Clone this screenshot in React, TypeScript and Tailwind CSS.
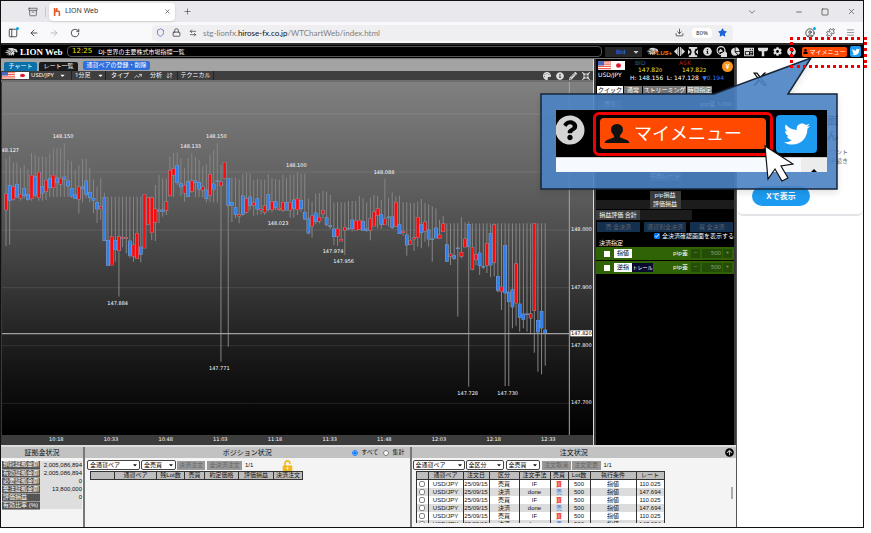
import React from "react";
import {
  FaInfoCircle, FaChartPie, FaCog, FaQuestionCircle, FaTwitter, FaPalette, FaStar, FaUser,
  FaCompressArrowsAlt, FaPencilAlt, FaCaretDown, FaArrowCircleUp, FaUnlockAlt, FaNewspaper,
} from "react-icons/fa";
import {
  ArrowLeft, ArrowRight, RotateCw, Shield, Lock, ArrowLeftRight, Download, CircleUser, Puzzle, Menu, X, Plus,
  ChevronDown, Minus, Square, Archive, PanelLeft, TrendingUp, ArrowDownUp,
} from "lucide-react";

const sans = "font-['Noto_Sans','Noto_Sans_CJK_JP',sans-serif]";
const arial = "font-['Liberation_Sans','Noto_Sans_CJK_JP',sans-serif]";
const verdana = "font-['DejaVu_Sans','Noto_Sans_CJK_JP',sans-serif]";

type Candle = [high: number, top: number, bottom: number, low: number, side: "r" | "b"];

const candles: Candle[] = [
  [222, 327, 375, 483, "r"], [212, 301, 347, 479, "b"], [233, 305, 343, 347, "r"], [233, 298, 336, 338, "b"],
  [248, 328, 340, 347, "r"], [240, 310, 332, 340, "b"], [252, 328, 343, 347, "b"], [204, 271, 341, 347, "r"],
  [210, 275, 330, 336, "b"], [214, 262, 338, 347, "r"], [214, 304, 324, 347, "b"], [216, 286, 319, 345, "r"],
  [206, 280, 308, 336, "b"], [192, 271, 308, 336, "r"], [190, 279, 293, 336, "b"], [188, 280, 298, 336, "r"],
  [175, 276, 283, 336, "b"], [225, 288, 303, 336, "b"], [228, 310, 333, 338, "b"], [254, 330, 341, 341, "b"],
  [240, 306, 342, 385, "r"], [222, 306, 311, 352, "b"], [222, 288, 328, 338, "b"], [248, 322, 338, 352, "b"],
  [283, 340, 346, 384, "b"], [304, 352, 372, 414, "b"], [280, 365, 371, 405, "r"], [323, 337, 467, 467, "b"],
  [335, 466, 541, 541, "b"], [335, 455, 540, 540, "r"], [335, 466, 494, 530, "b"], [335, 455, 497, 635, "r"],
  [335, 457, 460, 487, "r"], [335, 457, 460, 505, "r"], [335, 468, 511, 518, "b"], [335, 480, 514, 530, "r"],
  [335, 445, 521, 521, "r"], [335, 486, 508, 532, "b"], [328, 328, 489, 489, "r"], [335, 338, 418, 418, "r"],
  [335, 338, 443, 466, "r"], [300, 372, 412, 468, "r"], [270, 375, 378, 415, "b"], [280, 375, 380, 395, "b"],
  [280, 350, 376, 390, "r"], [214, 256, 332, 336, "r"], [204, 251, 270, 336, "r"], [202, 241, 293, 300, "b"],
  [220, 296, 305, 334, "b"], [248, 301, 324, 350, "r"], [218, 290, 335, 335, "b"], [204, 288, 319, 323, "r"],
  [216, 288, 293, 336, "b"], [224, 292, 312, 336, "b"], [244, 306, 315, 336, "r"], [238, 315, 341, 352, "b"],
  [210, 268, 331, 352, "r"], [195, 297, 312, 352, "b"], [175, 288, 290, 353, "b"], [240, 291, 302, 830, "r"],
  [232, 232, 279, 279, "r"], [281, 281, 361, 785, "b"], [278, 352, 361, 411, "b"], [278, 367, 388, 400, "b"],
  [284, 390, 393, 415, "r"], [268, 333, 388, 392, "b"], [263, 341, 382, 385, "r"], [266, 336, 361, 376, "b"],
  [284, 353, 360, 392, "r"], [282, 341, 372, 390, "b"], [284, 372, 375, 388, "r"], [284, 362, 382, 390, "r"],
  [268, 328, 373, 380, "b"], [280, 350, 374, 382, "r"], [282, 350, 367, 376, "b"], [284, 370, 373, 378, "r"],
  [270, 352, 376, 380, "r"], [278, 352, 375, 376, "b"], [268, 352, 375, 398, "r"], [270, 345, 370, 398, "b"],
  [262, 342, 374, 390, "r"], [266, 346, 371, 380, "b"], [266, 382, 402, 405, "b"], [340, 401, 444, 448, "b"],
  [350, 393, 423, 458, "r"], [326, 384, 409, 418, "b"], [324, 397, 408, 415, "r"], [318, 376, 386, 400, "r"],
  [320, 398, 418, 424, "b"], [330, 422, 425, 432, "b"], [352, 432, 455, 480, "b"], [352, 432, 454, 482, "r"],
  [352, 463, 468, 468, "r"], [352, 427, 436, 510, "r"], [348, 430, 432, 436, "b"], [348, 405, 431, 440, "b"],
  [348, 408, 435, 435, "r"], [332, 406, 433, 435, "r"], [340, 409, 436, 436, "b"], [352, 432, 436, 440, "b"],
  [338, 401, 436, 466, "r"], [330, 381, 423, 423, "r"], [333, 371, 391, 430, "r"], [344, 389, 418, 432, "b"],
  [281, 402, 419, 419, "r"], [338, 396, 398, 425, "b"], [322, 396, 427, 432, "b"], [335, 352, 424, 424, "r"],
  [332, 419, 446, 446, "b"], [352, 439, 443, 452, "r"], [352, 450, 480, 512, "b"], [354, 466, 478, 478, "r"],
  [354, 458, 462, 498, "r"], [350, 397, 458, 485, "r"], [342, 419, 443, 490, "b"], [354, 411, 438, 470, "r"],
  [358, 435, 462, 485, "b"], [364, 462, 464, 530, "b"], [370, 429, 459, 459, "b"], [404, 450, 460, 460, "r"],
  [392, 416, 440, 440, "r"], [415, 479, 529, 529, "b"], [415, 507, 514, 540, "r"], [415, 512, 520, 525, "b"],
  [415, 489, 491, 695, "b"], [397, 502, 514, 520, "r"], [412, 462, 486, 486, "r"], [410, 418, 484, 905, "b"],
  [415, 487, 553, 556, "r"], [415, 508, 524, 540, "r"], [415, 504, 542, 570, "b"], [415, 544, 546, 552, "b"],
  [415, 475, 541, 564, "r"], [415, 445, 540, 576, "b"], [415, 419, 532, 574, "r"], [415, 574, 616, 622, "b"],
  [415, 606, 619, 675, "r"], [415, 481, 624, 903, "b"], [415, 621, 650, 903, "b"], [415, 614, 666, 730, "b"],
  [415, 536, 654, 722, "r"], [415, 657, 697, 740, "b"], [415, 687, 703, 730, "b"], [415, 687, 689, 740, "b"],
  [415, 686, 699, 748, "r"], [415, 415, 677, 803, "r"], [415, 706, 741, 860, "b"], [415, 679, 729, 868, "b"],
  [415, 735, 745, 842, "b"],
];

const priceTags: [number, number, string][] = [
  [26, 200, "148.127"], [189, 160, "148.150"], [649, 160, "148.150"], [572, 189, "148.133"], [889, 247, "148.100"],
  [834, 419, "148.023"], [1152, 267, "148.088"], [999, 504, "147.974"], [1031, 535, "147.956"],
  [353, 660, "147.884"], [658, 855, "147.771"], [1403, 930, "147.728"], [1523, 930, "147.730"],
];
const levels: [number, string][] = [[435, "148.000"], [608, "147.900"], [782, "147.800"], [955, "147.700"]];
const times = ["10:18", "10:33", "10:48", "11:03", "11:18", "11:33", "11:48", "12:03", "12:18", "12:33"];

function Chart() {
  return (
    <div className="flex h-[363px] justify-end overflow-hidden bg-[#3a3a3a]">
      <svg viewBox="6 -9 1773 1089" className={`h-full w-auto shrink-0 ${verdana}`} fontSize="15" fill="#fff">
        <defs>
          <linearGradient id="sky" x1="0" y1="0" x2="0" y2="1">
            <stop offset="0" stopColor="#808080" />
            <stop offset="0.3" stopColor="#5f5f5f" />
            <stop offset="0.6" stopColor="#343434" />
            <stop offset="0.8" stopColor="#161616" />
            <stop offset="1" stopColor="#000" />
          </linearGradient>
        </defs>
        <rect x="0" y="-9" width="1780" height="1059" fill="url(#sky)" />
        {[87, 261, 435, 608, 782, 955].map((y) => (
          <path key={y} d={`M0 ${y}H1708`} stroke="#fff" strokeOpacity="0.1" strokeWidth="3" />
        ))}
        {candles.map(([high, top, bottom, low, side], i) => {
          const x = 18 + i * 10.93;
          return (
            <g key={i}>
              <path d={`M${x} ${high}V${low}`} stroke="#868686" strokeWidth="3" />
              <rect x={x - 5.5} y={top - 1} width="11" height={bottom - top + 2} fill="#93a4bb" />
              <rect x={x - 4} y={top} width="8" height={bottom - top} fill={side === "r" ? "#ff0808" : "#2f7fee"} />
            </g>
          );
        })}
        <path d="M0 746H1708" stroke="#a0a0a0" strokeWidth="4" />
        <path d="M1708 -9V1050" stroke="#a8a8a8" strokeWidth="3" />
        {priceTags.map(([x, y, t]) => (
          <text key={`${x}`} x={x} y={y} textAnchor="middle">{t}</text>
        ))}
        {levels.map(([y, t]) => (
          <text key={t} x="1713" y={y + 3}>{t}</text>
        ))}
        <rect x="1711" y="736" width="65" height="18" fill="#fff" />
        <text x="1713" y="751" fill="#000">147.820</text>
        <rect x="0" y="1050" width="1780" height="30" fill="#3c3c3c" />
        {times.map((t, i) => (
          <text key={t} x={169 + i * 164} y="1069" textAnchor="middle">{t}</text>
        ))}
      </svg>
    </div>
  );
}

function Lion({ className }: { className: string }) {
  return (
    <svg viewBox="0 0 30 22" className={className} fill="#d8d8d8">
      <path d="M1 12 9 9 3 8 12 5 7 3 17 2 27 5 30 11 26 12 24 10 21 11 23 14 20 19 18 16 15 20 14 16 10 20 10 15 4 18 9 13Z" />
      <path d="M5 10 15 7M8 14 16 9M13 15 19 9M20 7l5 2" stroke="#000" strokeWidth="1.2" fill="none" />
    </svg>
  );
}

function Flags({ className }: { className: string }) {
  return (
    <svg viewBox="0 0 27 10" preserveAspectRatio="none" className={className}>
      <rect width="27" height="10" fill="#fff" />
      <path d="M0 1H13M0 3.5H13M0 6H13M0 8.5H13" stroke="#f0604e" strokeWidth="1.3" />
      <rect width="6" height="5" fill="#4a67c0" />
      <circle cx="20.500" cy="5" r="2.500" fill="#e2182d" />
    </svg>
  );
}

function Browser() {
  return (
    <header className={`text-[#333] ${sans}`}>
      <div className="flex h-[21px] items-center bg-[#e9e9ed] pr-[7px]">
        <div className="flex w-[45px] items-center justify-end border-r border-[#c8c8cc] pr-[7px]">
          <Archive className="size-[10px]" strokeWidth={1.5} />
        </div>
        <div className="ml-[3px] flex h-[18px] w-[126px] items-center rounded-sm bg-white px-1 shadow-sm">
          <svg viewBox="0 0 10 10" className="size-[8px]" fill="none" stroke="#e8592a" strokeWidth="2">
            <path d="M2 0V10M2 5Q8 2 8 6V10M5 0 4 4" />
          </svg>
          <span className="ml-1 flex-1 text-[7px]">LION Web</span>
          <button aria-label="タブを閉じる"><X className="size-[7px]" /></button>
        </div>
        <button aria-label="新しいタブ" className="ml-[8px]"><Plus className="size-[9px]" strokeWidth={1.5} /></button>
        <div className="flex-1" />
        <ChevronDown className="mr-[38px] size-[10px]" strokeWidth={1.5} />
        <button aria-label="最小化" className="mr-[18px]"><Minus className="size-[8px]" /></button>
        <button aria-label="最大化" className="mr-[18px]"><Square className="size-[8px]" /></button>
        <button aria-label="閉じる"><X className="size-[9px]" strokeWidth={1.5} /></button>
      </div>
      <div className="flex h-[21px] items-center bg-[#f9f9fb] pl-[7px] pr-[8px]">
        <span className="relative">
          <PanelLeft className="size-[10px]" />
          <span className="absolute -right-px -top-px size-[3px] rounded-full bg-[#00a8f0]" />
        </span>
        <button aria-label="戻る" className="ml-[11px]"><ArrowLeft className="size-[10px]" /></button>
        <button aria-label="進む" className="ml-[10px] text-[#b0b0b0]"><ArrowRight className="size-[10px]" /></button>
        <button aria-label="再読み込み" className="ml-[11px]"><RotateCw className="size-[10px]" /></button>
        <div className="ml-[72px] flex h-[16px] flex-1 items-center rounded-sm bg-[#efeff1] pl-1 pr-[6px]">
          <Shield className="size-[9px] text-[#4a64b8]" />
          <Lock className="ml-[7px] size-[9px]" />
          <ArrowLeftRight className="ml-[8px] size-[8px]" />
          <span className="ml-[6px] flex-1 font-['Lato',sans-serif] text-[8px] text-[#808080]">
            stg-lionfx.<span className="text-[#111]">hirose-fx.co.jp</span>/WTChartWeb/index.html
          </span>
          <Download className="size-[9px]" />
          <span className="ml-[8px] w-[20px] rounded-sm bg-white text-center text-[6px] leading-[10px] text-[#222]">80%</span>
          <FaStar className="ml-[6px] size-[9px] text-[#1a66d8]" />
        </div>
        <span className="relative ml-[72px]">
          <CircleUser className="size-[10px]" />
          <span className="absolute -right-px -top-px size-[3px] rounded-full bg-[#00a8f0]" />
        </span>
        <Puzzle className="ml-[11px] size-[9px]" />
        <Menu className="ml-[11px] size-[9px] text-[#777]" />
      </div>
    </header>
  );
}

const toolIcons = [
  <svg key="a" viewBox="0 0 12 12" className="size-[11px]" fill="currentColor"><path d="M0 6 4 2V10ZM12 6 8 2V10ZM4.500 1H5.500V11H4.500ZM6.500 1H7.500V11H6.500Z" /></svg>,
  <svg key="b" viewBox="0 0 12 12" className="size-[10px]" fill="currentColor"><path d="M1 0H11V2H9L7.500 6 9 10H11V12H1V10H3L4.500 6 3 2H1ZM0 3 3 6 0 9ZM12 3 9 6 12 9Z" /></svg>,
  <FaInfoCircle key="c" className="size-[9px]" />,
  <svg key="d" viewBox="0 0 12 12" className="size-[11px]" fill="none" stroke="currentColor" strokeWidth="1.3"><circle cx="5.500" cy="5" r="4.300" /><path d="M3 7 5 4 7 6M6 11.300H12V8.500L10 6.500 6 8.500Z" fill="currentColor" /></svg>,
  <FaChartPie key="e" className="size-[9px]" />,
  <svg key="f" viewBox="0 0 12 12" className="size-[10px]" fill="currentColor"><path fillRule="evenodd" d="M0 1H12V11H0ZM1 5V10H11V5ZM7 2V4H8V2ZM9.500 2V4H10.500V2Z" /><path d="M2 6H6V9H2ZM7 6H10V7H7ZM7 8H10V9H7Z" /></svg>,
  <svg key="g" viewBox="0 0 12 12" className="size-[10px]" fill="currentColor"><path d="M0 1H12V4H11V5H7.500V11H4.500V5H1V4H0Z" /></svg>,
  <FaCog key="h" className="size-[9px]" />,
  <FaQuestionCircle key="i" className="size-[9px]" />,
];

function AppBar() {
  return (
    <div className="flex h-[15px] items-center border-t-2 border-[#2c2c2c] bg-black pl-[3px] pr-[2px] text-white">
      <Lion className="h-[10px] w-[14px]" />
      <span className="ml-[2px] w-[47px] whitespace-nowrap font-['Liberation_Serif',serif] text-[9px] font-bold leading-[12px]">LION Web</span>
      <div className={`flex h-[11px] flex-1 items-center rounded-sm border border-[#555] pl-[4px] leading-[9px] ${verdana}`}>
        <time className="text-[7px] text-[#e8e000]">12:25</time>
        <span className="ml-[6px] text-[6px]">DJ-世界の主要株式市場指標一覧</span>
      </div>
      <label className="relative ml-[3px] mr-[4px]">
        <select aria-label="価格種別" className={`block h-[10px] w-[37px] appearance-none bg-[#262626] pl-[11px] text-[6px] leading-[9px] text-[#2f7de6] ${verdana}`}>
          <option>Bid</option>
        </select>
        <FaCaretDown className="pointer-events-none absolute right-[2px] top-px size-[8px] text-[#ccc]" />
      </label>
      <div className="flex w-[26px] items-end">
        <Lion className="h-[11px] w-[14px]" />
        <span className="-ml-[6px] text-[6px] font-bold italic leading-[7px] text-[#f08010] font-['Liberation_Sans',sans-serif]">PLUS+</span>
      </div>
      <div className="flex text-[#ddd]">
        {toolIcons.map((icon, i) => (
          <button key={i} aria-label={`ツール${i + 1}`} className="flex h-[12px] w-[14px] items-center justify-center">{icon}</button>
        ))}
      </div>
      <button className={`ml-[4px] flex h-[10px] w-[45px] items-center justify-center gap-px whitespace-nowrap rounded-xs bg-[#ff4800] text-[6px] leading-[10px] ${sans}`}>
        <FaUser className="size-[5px] text-black" />マイメニュー
      </button>
      <button aria-label="Twitter" className="ml-[3px] flex size-[11px] items-center justify-center rounded-xs bg-[#1d9bf0]">
        <FaTwitter className="size-[8px]" />
      </button>
    </div>
  );
}

function ChartPane() {
  return (
    <section className="min-w-0 flex-1 border-r border-[#ddd]">
      <nav className={`flex h-[12px] items-end bg-[#a3a3a3] pl-[3px] text-center text-[6px] leading-[9px] text-white ${sans}`}>
        <button className="h-[9px] w-[33px] rounded-t-xs bg-[#0b6fa8]">チャート</button>
        <button className="ml-[2px] h-[9px] w-[39px] rounded-t-xs bg-[#1a1a1a]">レート一覧</button>
        <button className="mb-px ml-[5px] h-[9px] w-[67px] rounded-xs bg-[#2f6fdc]">通貨ペアの登録・削除</button>
      </nav>
      <div className={`flex h-[11px] items-center border-b-2 border-[#6e6e6e] bg-[#3f3f3f] text-[6px] leading-[9px] text-white ${sans}`}>
        <Flags className="ml-px h-[7px] w-[27px]" />
        <button className="flex w-[43px] items-center justify-between border-r border-[#222] pl-[2px] pr-[5px]">USD/JPY<FaCaretDown className="size-[7px]" /></button>
        <button className="flex w-[34px] items-center justify-between border-r border-[#222] pl-[3px] pr-[1px]">1分足<FaCaretDown className="size-[7px]" /></button>
        <button className="flex w-[37px] items-center justify-between pl-[5px] pr-px">タイプ<TrendingUp className="size-[8px]" /></button>
        <button className="flex w-[35px] items-center justify-between border-r border-[#222] pl-[7px] pr-[4px]">分析<ArrowDownUp className="size-[7px]" /></button>
        <button className="w-[36px] border-r border-[#222] text-center">テクニカル</button>
        <div className="flex flex-1 justify-end gap-[5px] pr-[3px] text-[#ddd]">
          <FaPalette className="size-[8px]" />
          <FaInfoCircle className="size-[8px]" />
          <FaPencilAlt className="size-[8px]" />
          <FaCompressArrowsAlt className="size-[8px]" />
        </div>
      </div>
      <Chart />
    </section>
  );
}

function OrderRow({ name, trail }: { name: string; trail?: boolean }) {
  return (
    <div className="flex h-[13px] items-center bg-[#2f6305] pl-[8px] pr-[2px] text-white">
      <input type="checkbox" aria-label={name} className="size-[6px] appearance-none bg-white" />
      <button className="ml-[4px] h-[9px] w-[18px] bg-white text-center text-black">{name}</button>
      <span className="flex-1">
        {trail && <button className="block h-[9px] w-[21px] whitespace-nowrap bg-[#0a0a30] text-center text-[5px] leading-[9px]">トレール</button>}
      </span>
      <span className="mr-[3px]">pip差</span>
      <button aria-label={`${name} 減らす`} className="h-[9px] w-[9px] bg-[#254d08] text-[#8aa870]">−</button>
      <input aria-label={`${name} pip差`} defaultValue="500" className="ml-[2px] h-[9px] w-[20px] bg-[#254d08] pr-px text-right text-[#8aa870]" />
      <button aria-label={`${name} 増やす`} className="ml-px h-[9px] w-[9px] bg-[#254d08] text-[#8aa870]">+</button>
    </div>
  );
}

function QuickPane() {
  return (
    <section className={`flex w-[142px] shrink-0 flex-col border-x-2 border-[#3a3a3a] bg-black text-[6px] leading-[9px] text-white ${sans}`}>
      <div className="flex h-[26px] gap-[4px] pl-[2px] pr-px">
        <div className="w-[28px] whitespace-nowrap">
          <Flags className="mt-[2px] h-[9px] w-[27px]" />
          <span className={`block text-[6px] ${verdana}`}>USD/JPY</span>
        </div>
        <div className={`min-w-0 flex-1 whitespace-nowrap ${verdana}`}>
          <div className="flex pl-[5px] leading-[7px]"><span className="w-[44px] text-[#1d63b8]">BID</span><span className="text-[#b02418]">ASK</span></div>
          <div className="flex pl-[8px] leading-[8px] text-[#e8e832]">
            <span className="w-[44px]">147.82<span className="text-[5px]">0</span></span><span>147.82<span className="text-[5px]">2</span></span>
          </div>
          <div className="flex justify-between pr-[10px] leading-[8px]"><span>H: 148.156</span><span>L: 147.128</span><span className="text-[#2f7de6]">▼0.194</span></div>
        </div>
        <span className="-ml-[16px] mt-[2px] size-[11px] rounded-full bg-[#f79420] text-center text-[7px] font-bold leading-[11px]">¥</span>
      </div>
      <div className="mt-px flex gap-px pl-px text-center">
        <button className="w-[26px] bg-white text-black">クイック</button>
        <button className="w-[18px] bg-[#777]">通常</button>
        <button className="w-[43px] whitespace-nowrap bg-[#777]">ストリーミング</button>
        <button className="w-[25px] bg-[#777]">時間指定</button>
      </div>
      <div className="mt-[5px] flex items-center justify-between px-[2px]"><button className="w-[24px] bg-[#333]">売り</button><span>pip値 1,000</span></div>
      <div className="mx-auto mt-[53px] flex w-[31px] flex-col gap-px text-center">
        <span className="bg-[#3c3c3c]">Lot数</span>
        <span className="bg-[#3c3c3c]">平均レート</span>
      </div>
      <div className="mx-auto mt-[10px] w-[31px] bg-[#3c3c3c] text-center">pip損益</div>
      <div className="bg-[#1c1c1c]"><div className="mx-auto w-[31px] bg-[#3c3c3c] text-center">評価損益</div></div>
      <div className="mt-px flex h-[10px] leading-[10px]"><span className="w-[44px] bg-[#3c3c3c] text-center">損益評価 合計</span><span className="w-[52px] bg-[#1c1c1c]" /></div>
      <div className="mt-[2px] grid h-[10px] grid-cols-3 gap-[4px] px-px text-center leading-[10px] text-[#5b6470]">
        <button className="bg-[#14304f]">売 全決済</button>
        <button className="bg-[#14304f] whitespace-nowrap">通貨別全決済</button>
        <button className="bg-[#14304f]">買 全決済</button>
      </div>
      <label className="flex h-[8px] items-center justify-end gap-[2px] whitespace-nowrap">
        <input type="checkbox" defaultChecked className="size-[6px]" />全決済確認画面を表示する
      </label>
      <div className="mb-px h-[6px] pl-[3px] leading-[6px]">決済指定</div>
      <div className="flex flex-col gap-px"><OrderRow name="指値" /><OrderRow name="逆指" trail /></div>
    </section>
  );
}

function Select({ label, className }: { label: string; className: string }) {
  return (
    <label className={`relative ${className}`}>
      <select aria-label={label} className="block h-[10px] w-full appearance-none rounded-xs border border-[#444] bg-white pl-[2px] text-[6px] leading-[8px] text-black">
        <option>{label}</option>
      </select>
      <FaCaretDown className="pointer-events-none absolute right-[2px] top-[2px] size-[6px]" />
    </label>
  );
}

const th = "whitespace-nowrap border border-[#333] bg-[#bdbdbd] p-0 text-center font-normal";
const disabledButton = "h-[9px] whitespace-nowrap bg-[#999] text-center leading-[9px] text-[#666]";
const title = "flex h-[11px] items-center justify-center bg-[#c2c2c2] text-[7px] leading-[11px]";

const margin = [
  ["預託証拠金額", "2,005,086,894"], ["有効証拠金額", "2,005,086,894"], ["必要証拠金額", "0"],
  ["発注証拠金額", "13,800,000"], ["評価損益", "0"], ["有効比率 (%)", ""],
];

function Bottom() {
  return (
    <div className={`flex min-h-0 flex-1 border-t-2 border-[#ddd] bg-[#f4f4f4] text-[6px] leading-[8px] text-[#111] ${arial}`}>
      <section className="w-[84px] shrink-0 border-r-2 border-[#777]">
        <h2 className={title}>証拠金状況</h2>
        <table className="ml-px mt-[3px] w-[80px] table-fixed">
          <tbody>
            {margin.map(([k, v]) => (
              <tr key={k} className="h-[8px]">
                <th className="w-[38px] whitespace-nowrap border-b border-[#999] bg-[#555] p-0 pl-px text-left font-normal leading-[7px] text-white">{k}</th>
                <td className="bg-[#dedede] p-0 text-right leading-[7px]">{v}</td>
              </tr>
            ))}
          </tbody>
        </table>
      </section>
      <section className="min-w-0 flex-1 border-r-2 border-[#777]">
        <div className={`${title} relative`}>
          <h2>ポジション状況</h2>
          <div className="absolute right-[5px] flex items-center gap-[2px] text-[6px]">
            <label className="flex items-center gap-[3px]"><input type="radio" name="view" defaultChecked className="size-[6px]" />すべて</label>
            <label className="ml-[3px] flex items-center gap-[3px]"><input type="radio" name="view" className="size-[6px]" />集計</label>
          </div>
        </div>
        <div className="mt-px flex h-[12px] items-center pl-[2px]">
          <Select label="全通貨ペア" className="w-[53px]" />
          <Select label="全売買" className="ml-px w-[35px]" />
          <button disabled className={`ml-px w-[28px] ${disabledButton}`}>決済注文</button>
          <button disabled className={`ml-[2px] w-[35px] ${disabledButton}`}>全決済注文</button>
          <span className="ml-[3px]">1/1</span>
          <FaUnlockAlt className="ml-[29px] size-[11px] text-[#f5b81c]" />
        </div>
        <table className="ml-[5px] w-[212px] table-fixed border-collapse">
          <thead>
            <tr className="h-[8px] leading-[7px]">
              <th className={`w-[24px] ${th}`} />
              <th className={`w-[42px] ${th}`}>通貨ペア</th>
              <th className={`w-[28px] ${th}`}>残Lot数</th>
              <th className={`w-[20px] ${th}`}>売買</th>
              <th className={`w-[34px] ${th}`}>約定価格</th>
              <th className={`w-[35px] ${th}`}>評価損益</th>
              <th className={`w-[29px] ${th}`}>決済注文</th>
            </tr>
          </thead>
        </table>
      </section>
      <section className="min-w-0 flex-1 overflow-hidden">
        <div className={`${title} relative`}>
          <h2>注文状況</h2>
          <button aria-label="上へ" className="absolute right-[2px]"><FaArrowCircleUp className="size-[9px] text-black" /></button>
        </div>
        <div className="mt-px flex h-[12px] items-center pl-px">
          <Select label="全通貨ペア" className="w-[52px]" />
          <Select label="全区分" className="ml-px w-[38px]" />
          <Select label="全売買" className="ml-[2px] w-[34px]" />
          <button disabled className={`ml-[2px] w-[29px] ${disabledButton}`}>注文取消</button>
          <button disabled className={`ml-px w-[29px] ${disabledButton}`}>注文変更</button>
          <span className="ml-[3px]">1/1</span>
        </div>
        <div className="flex h-[52px] justify-between overflow-hidden">
          <table className="ml-[4px] w-[248px] table-fixed border-collapse">
            <thead>
              <tr className="h-[8px] leading-[7px]">
                <th className={`w-[12px] ${th}`} />
                <th className={`w-[35px] ${th}`}>通貨ペア</th>
                <th className={`w-[26px] ${th}`}>注文日</th>
                <th className={`w-[30px] ${th}`}>区分</th>
                <th className={`w-[31px] ${th}`}>注文手法</th>
                <th className={`w-[18px] ${th}`}>売買</th>
                <th className={`w-[22px] ${th}`}>Lot数</th>
                <th className={`w-[46px] ${th}`}>執行条件</th>
                <th className={`w-[28px] ${th}`}>レート</th>
              </tr>
            </thead>
            <tbody>
              {[0, 1, 2, 3, 4, 5].map((i) => {
                const odd = i % 2 === 1;
                return (
                  <tr key={i} className={`h-[8px] whitespace-nowrap text-center *:border-x *:border-[#333] *:p-0 ${odd ? "bg-[#dcdcdc]" : "bg-white"}`}>
                    <td><input type="checkbox" aria-label={`注文${i + 1}`} className="mx-auto block size-[6px] appearance-none rounded-xs border border-[#888] bg-white" /></td>
                    <td>USD/JPY</td>
                    <td>25/09/15</td>
                    <td>{odd ? "決済" : "売買"}</td>
                    <td>{odd ? "done" : "IF"}</td>
                    <td className={odd ? "text-[#2f7de6]" : "font-bold text-[#f01818]"}>{odd ? "売" : "買"}</td>
                    <td>500</td>
                    <td>指値</td>
                    <td>{odd ? "147.694" : "110.025"}</td>
                  </tr>
                );
              })}
            </tbody>
          </table>
          <span className="mr-[3px] mt-[16px] h-[12px] w-[2px] bg-[#aaa]" />
        </div>
      </section>
    </div>
  );
}

function SocialPane() {
  return (
    <aside className={`w-[126px] shrink-0 pt-[13px] ${sans}`}>
      <div className="h-[145px] rounded-b-md border-b-2 border-[#e4e4e8] px-[15px]">
        <svg viewBox="0 0 24 24" className="size-[16px]" fill="#111" aria-label="X">
          <path d="M18.200 2.200h3.300l-7.200 8.300 8.500 11.200H16.200l-5.200-6.800L5 21.700H1.700l7.700-8.800L1.300 2.200H8l4.700 6.200zm-1.100 17.600h1.800L7.100 4.100H5.100z" />
        </svg>
        <p className="mr-[10px] mt-[26px] text-right text-[11px] font-bold leading-[15px] text-[#333]">X の画面<br />ません</p>
        <p className="mt-[5px] whitespace-nowrap text-right text-[6px] leading-[9px] text-[#666]">アカウント<br />お手続き</p>
        <button className="mt-[20px] block h-[20px] w-[58px] rounded-full bg-[#1d9bf0] text-center text-[8px] font-bold text-white">Xで表示</button>
      </div>
    </aside>
  );
}

function Callout() {
  return (
    <div className="absolute right-[33px] top-[56px] h-[134px] w-[298px]">
      <svg viewBox="0 0 298 134" className="absolute inset-0 size-full drop-shadow-md">
        <path d="M1 38H174L271 2 248 38H297V133H1Z" fill="#4d84c6" fillOpacity="0.9" stroke="#16253a" strokeWidth="1.500" />
      </svg>
      <div className="absolute left-[16px] top-[54px] w-[271px]">
        <div className="flex h-[47px] items-center overflow-hidden bg-black">
          <FaQuestionCircle className="-ml-px -mt-[8px] size-[30px] shrink-0 text-[#d4d4d4]" />
          <div className="ml-[8px] flex h-[44px] w-[180px] shrink-0 items-center justify-center rounded-md border-[3px] border-[#f00000]">
            <button className={`flex h-[31px] w-[166px] items-center whitespace-nowrap rounded-sm bg-[#ff4800] pl-[4px] text-[18px] text-white ${sans}`}>
              <svg viewBox="0 0 26 20" className="mr-[4px] h-[19px] w-[26px]" fill="#111">
                <path d="M13 0C18 0 20 4 19 8 18 11 16 11 16 14L24 17Q26 18 26 20H0Q0 18 2 17L10 14C10 11 8 11 7 8 6 4 8 0 13 0Z" />
              </svg>
              マイメニュー
            </button>
          </div>
          <span className="ml-[3px] flex h-[38px] w-[41px] shrink-0 items-center justify-center rounded-sm bg-[#1d9bf0]">
            <FaTwitter className="size-[26px] text-white" />
          </span>
        </div>
        <div className="flex h-[15px] justify-end border-t border-[#ccc] bg-[#f6f9fd]">
          <span className="flex w-[26px] items-end justify-center bg-[#ececec]">
            <svg viewBox="0 0 6 3" className="h-[3px] w-[6px]"><path d="M0 3 3 0 6 3Z" /></svg>
          </span>
        </div>
      </div>
      <svg viewBox="0 0 30 37" className="absolute left-[224px] top-[89px] h-[37px] w-[30px]" fill="#fff" stroke="#111" strokeWidth="1.200">
        <path d="M1 1 29 19 17 21 24 33 18 36 11 24 4 34Z" />
      </svg>
    </div>
  );
}

export default function App() {
  return (
    <div className="relative h-screen min-h-[533px] overflow-hidden bg-white pb-[5px] pr-[7px]">
      <div className="flex h-full flex-col border border-[#111]">
        <Browser />
        <AppBar />
        <main className="flex min-h-0 flex-1">
          <div className="flex min-w-0 flex-1 flex-col border-r border-[#555]">
            <div className="flex border-t border-[#777]">
              <ChartPane />
              <QuickPane />
            </div>
            <Bottom />
          </div>
          <SocialPane />
        </main>
      </div>
      <Callout />
      <div className="pointer-events-none absolute right-[4px] top-[37px] h-[31px] w-[77px] border-3 border-dotted border-[#f00000]" />
    </div>
  );
}
